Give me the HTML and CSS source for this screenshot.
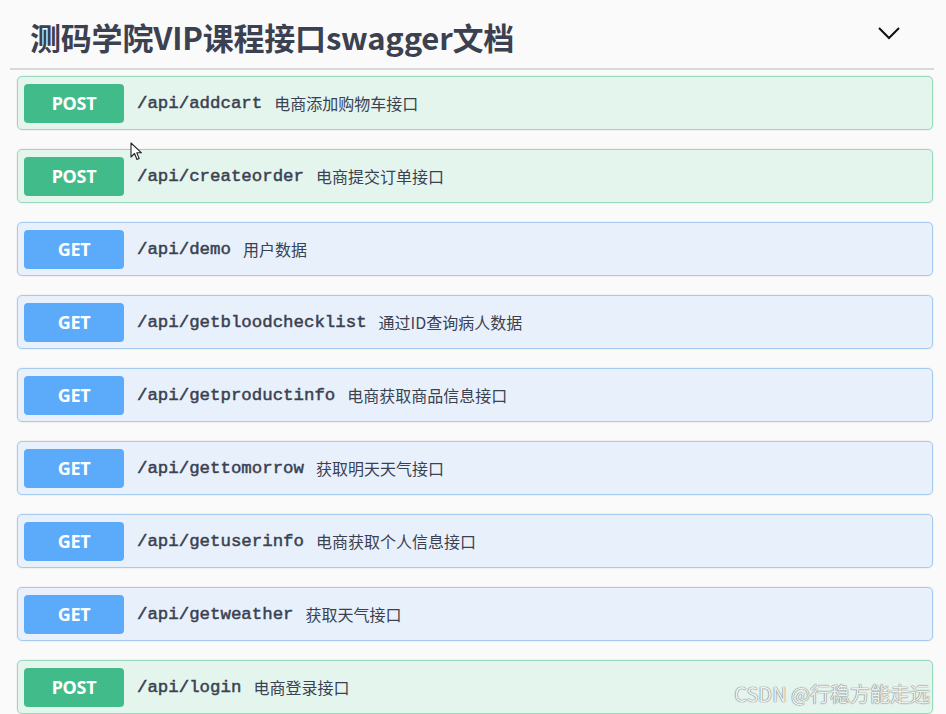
FILE: index.html
```html
<!DOCTYPE html>
<html lang="zh-CN">
<head>
<meta charset="utf-8">
<title>swagger</title>
<link rel="stylesheet" href="styles.css">
</head>
<body>
<div class="page">
  <div class="header">
    <h1 class="title">测码学院VIP课程接口swagger文档</h1>
    <svg class="chevron" width="24" height="14" viewBox="0 0 24 14"><path d="M2 2 L12 12 L22 2" fill="none" stroke="#111" stroke-width="2"/></svg>
  </div>
  <div class="ops">
    <div class="op post"><span class="badge">POST</span><span class="path">/api/addcart</span><span class="desc">电商添加购物车接口</span></div>
    <div class="op post"><span class="badge">POST</span><span class="path">/api/createorder</span><span class="desc">电商提交订单接口</span></div>
    <div class="op get"><span class="badge">GET</span><span class="path">/api/demo</span><span class="desc">用户数据</span></div>
    <div class="op get"><span class="badge">GET</span><span class="path">/api/getbloodchecklist</span><span class="desc">通过ID查询病人数据</span></div>
    <div class="op get"><span class="badge">GET</span><span class="path">/api/getproductinfo</span><span class="desc">电商获取商品信息接口</span></div>
    <div class="op get"><span class="badge">GET</span><span class="path">/api/gettomorrow</span><span class="desc">获取明天天气接口</span></div>
    <div class="op get"><span class="badge">GET</span><span class="path">/api/getuserinfo</span><span class="desc">电商获取个人信息接口</span></div>
    <div class="op get"><span class="badge">GET</span><span class="path">/api/getweather</span><span class="desc">获取天气接口</span></div>
    <div class="op post"><span class="badge">POST</span><span class="path">/api/login</span><span class="desc">电商登录接口</span></div>
  </div>
  <svg class="cursor" width="14" height="20" viewBox="0 0 14 20"><path d="M1 1 L1 15 L4.5 11.5 L7 17.5 L9.2 16.6 L6.8 10.8 L11.5 10.8 Z" fill="#fff" stroke="#222" stroke-width="1.1" stroke-linejoin="round"/></svg>
  <div class="watermark">CSDN @行稳方能走远</div>
</div>
</body>
</html>
```
FILE: styles.css
```css
html, body {
  margin: 0;
  padding: 0;
  background: #fafafa;
}
body {
  font-family: "Noto Sans CJK SC", "Noto Sans", sans-serif;
  color: #3b4151;
}
.page {
  position: relative;
  width: 946px;
  height: 714px;
  overflow: hidden;
  padding: 0 12px 0 10px;
  box-sizing: border-box;
}
.header {
  height: 68px;
  border-bottom: 2px solid #d9d9d9;
  display: flex;
  align-items: center;
  justify-content: space-between;
  padding: 0 33px 0 20px;
}
.title {
  margin: 0;
  font-size: 31px;
  font-weight: 700;
  color: #3b4151;
  letter-spacing: -0.2px;
  line-height: 1;
  padding-top: 4px;
}
.chevron {
  display: block;
  margin-top: -2px;
}
.ops {
  display: flex;
  flex-direction: column;
  gap: 19px;
  padding: 6px 1px 0 7px;
}
.op {
  height: 54px;
  box-sizing: border-box;
  border: 1.5px solid;
  border-radius: 5px;
  display: flex;
  align-items: center;
  padding: 0 6px;
  box-shadow: 0 0 2px rgba(0,0,0,0.12);
}
.op.post {
  background: #e4f5ee;
  border-color: #98d9bd;
}
.op.get {
  background: #e8f1fb;
  border-color: #a6cbf0;
}
.badge {
  width: 100px;
  height: 39px;
  border-radius: 4px;
  color: #fff;
  font-weight: 700;
  font-size: 18px;
  display: flex;
  align-items: center;
  justify-content: center;
  font-family: "Noto Sans", "Noto Sans CJK SC", sans-serif;
  letter-spacing: -0.3px;
}
.post .badge { background: #41bb89; }
.get .badge { background: #5babfa; }
.path {
  margin-left: 13px;
  font-family: "Liberation Mono", "DejaVu Sans Mono", monospace;
  font-size: 17.4px;
  font-weight: 400;
  -webkit-text-stroke: 0.5px #3b4151;
  color: #3b4151;
}
.desc {
  margin-left: 12px;
  font-size: 16px;
  color: #3b4151;
}
.cursor {
  position: absolute;
  left: 130px;
  top: 142px;
}
.watermark {
  position: absolute;
  right: 16px;
  bottom: 6px;
  font-family: "Noto Sans CJK SC", sans-serif;
  font-size: 20px;
  color: #eef0ee;
  text-shadow: 0 0 1px #6f6f6f, 0 0 1px #6f6f6f;
}
```
